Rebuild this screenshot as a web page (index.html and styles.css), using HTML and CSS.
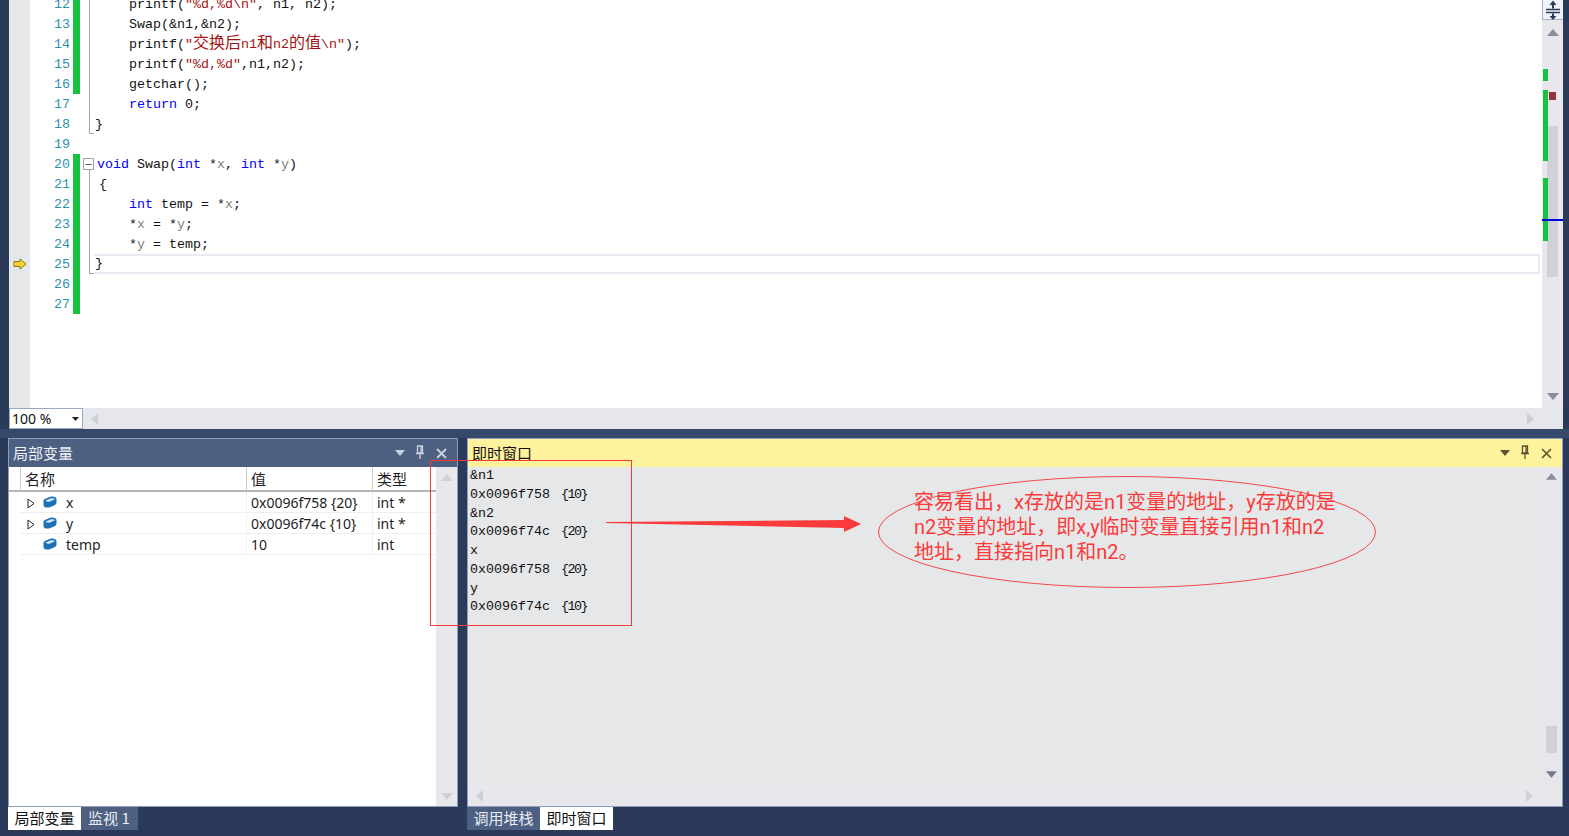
FILE: index.html
```html
<!DOCTYPE html>
<html lang="zh">
<head>
<meta charset="utf-8">
<title>局部变量</title>
<link rel="stylesheet" href="styles.css">
</head>
<body>
<div class="editor">
  <div class="code-area">
    <div class="lines">
      <div class="line"><span class="mg"></span><span class="num">12</span><span class="chg"></span><span class="ol ol-bar"></span><span class="code">    printf(<s>"%d,%d\n"</s>, n1, n2);</span></div>
      <div class="line"><span class="mg"></span><span class="num">13</span><span class="chg"></span><span class="ol ol-bar"></span><span class="code">    Swap(&amp;n1,&amp;n2);</span></div>
      <div class="line"><span class="mg"></span><span class="num">14</span><span class="chg"></span><span class="ol ol-bar"></span><span class="code">    printf(<s>"<i>交换后</i>n1<i>和</i>n2<i>的值</i>\n"</s>);</span></div>
      <div class="line"><span class="mg"></span><span class="num">15</span><span class="chg"></span><span class="ol ol-bar"></span><span class="code">    printf(<s>"%d,%d"</s>,n1,n2);</span></div>
      <div class="line"><span class="mg"></span><span class="num">16</span><span class="chg"></span><span class="ol ol-bar"></span><span class="code">    getchar();</span></div>
      <div class="line"><span class="mg"></span><span class="num">17</span><span class="chg off"></span><span class="ol ol-bar"></span><span class="code">    <b>return</b> 0;</span></div>
      <div class="line"><span class="mg"></span><span class="num">18</span><span class="chg off"></span><span class="ol ol-end"></span><span class="code brace">}</span></div>
      <div class="line"><span class="mg"></span><span class="num">19</span><span class="chg off"></span><span class="ol"></span><span class="code"></span></div>
      <div class="line"><span class="mg"></span><span class="num">20</span><span class="chg"></span><span class="ol"><svg width="17" height="20" viewBox="0 0 17 20"><path d="M9.500 16V20" stroke="#a5a5a5"/><rect x="3.500" y="4.500" width="10" height="11" fill="#fff" stroke="#a5a5a5"/><path d="M5.500 10.500H11.500" stroke="#555"/></svg></span><span class="code"><b>void</b> Swap(<b>int</b> *<u>x</u>, <b>int</b> *<u>y</u>)</span></div>
      <div class="line"><span class="mg"></span><span class="num">21</span><span class="chg"></span><span class="ol ol-bar"></span><span class="code open">{</span></div>
      <div class="line"><span class="mg"></span><span class="num">22</span><span class="chg"></span><span class="ol ol-bar"></span><span class="code">    <b>int</b> temp = *<u>x</u>;</span></div>
      <div class="line"><span class="mg"></span><span class="num">23</span><span class="chg"></span><span class="ol ol-bar"></span><span class="code">    *<u>x</u> = *<u>y</u>;</span></div>
      <div class="line"><span class="mg"></span><span class="num">24</span><span class="chg"></span><span class="ol ol-bar"></span><span class="code">    *<u>y</u> = temp;</span></div>
      <div class="line"><span class="mg"><svg width="14" height="12" viewBox="0 0 14 12"><path d="M1 3.500H7V1L13 6L7 11V8.500H1Z" fill="#f6d32d" stroke="#8a7a20"/></svg></span><span class="num">25</span><span class="chg"></span><span class="ol ol-end"></span><span class="code current">}</span></div>
      <div class="line"><span class="mg"></span><span class="num">26</span><span class="chg"></span><span class="ol"></span><span class="code"></span></div>
      <div class="line"><span class="mg"></span><span class="num">27</span><span class="chg"></span><span class="ol"></span><span class="code"></span></div>
      <div class="line fill"><span class="mg"></span><span class="code"></span></div>
    </div>
    <div class="vscroll">
      <div class="splitter"><svg width="21" height="20" viewBox="0 0 21 20"><path d="M3 9.500H17M3 12.500H17" stroke="#2f3b52" stroke-width="1.500"/><path d="M10 0.500L6.500 5H9V8.500H11V5H13.500ZM10 20L6.500 16H9V13.500H11V16H13.500Z" fill="#2f3b52"/></svg></div>
      <svg class="arrow-up" width="12" height="7" viewBox="0 0 12 7"><path d="M6 0L12 7H0Z" fill="#8a8c9c"/></svg>
      <span class="thumb"></span>
      <span class="g g1"></span><span class="g g2"></span><span class="g g3"></span>
      <span class="red"></span>
      <span class="blue"></span>
      <svg class="arrow-down" width="12" height="7" viewBox="0 0 12 7"><path d="M0 0H12L6 7Z" fill="#8a8c9c"/></svg>
    </div>
  </div>
</div>
<div class="hbar">
  <div class="combo"><span>100 %</span><svg width="7" height="4" viewBox="0 0 7 4"><path d="M0 0H7L3.500 4Z" fill="#222"/></svg></div>
  <svg width="7" height="12" viewBox="0 0 7 12"><path d="M7 0V12L0 6Z" fill="#cfd0d6"/></svg>
  <svg class="push" width="7" height="12" viewBox="0 0 7 12"><path d="M0 0V12L7 6Z" fill="#cfd0d6"/></svg>
</div>
<div class="divider"></div>
<div class="panels">
  <section class="panel locals">
    <header class="title">
      <span class="title-text">局部变量</span>
      <svg class="dd" width="10" height="6" viewBox="0 0 10 6"><path d="M0 0H10L5 6Z" fill="#ccd3e0"/></svg>
      <svg class="pin" width="10" height="14" viewBox="0 0 10 14"><path d="M2.500 1H7.500V8H2.500ZM1 8.500H9M5 9V14M6 1V8" fill="none" stroke="#ccd3e0" stroke-width="1.300"/></svg>
      <svg class="cl" width="11" height="11" viewBox="0 0 11 11"><path d="M1 1L10 10M10 1L1 10" stroke="#ccd3e0" stroke-width="1.800"/></svg>
    </header>
    <div class="locals-body">
      <div class="tbl">
        <div class="tr th"><span></span><span class="c c-name">名称</span><span class="c">值</span><span class="c">类型</span></div>
        <div class="tr"><span></span><span class="c c-name"><svg class="tri" width="8" height="11" viewBox="0 0 8 11"><path d="M1 1L7 5.500L1 10Z" fill="#fff" stroke="#222"/></svg><svg class="cube" width="14" height="12" viewBox="0 0 14 12"><path d="M0.500 4.500Q0.500 3.500 3 2.500L8 0.500Q13 0 13.500 3V7Q13.500 8 11 9.500L6 11.500Q0.500 12 0.500 9Z" fill="#1c6fb5"/><path d="M2.500 4.500L8 2.300Q11 2 12 3.300L6.500 5.800Q3.500 6 2.500 4.500Z" fill="#cfe6f6"/></svg>x</span><span class="c">0x0096f758 {20}</span><span class="c">int *</span></div>
        <div class="tr"><span></span><span class="c c-name"><svg class="tri" width="8" height="11" viewBox="0 0 8 11"><path d="M1 1L7 5.500L1 10Z" fill="#fff" stroke="#222"/></svg><svg class="cube" width="14" height="12" viewBox="0 0 14 12"><path d="M0.500 4.500Q0.500 3.500 3 2.500L8 0.500Q13 0 13.500 3V7Q13.500 8 11 9.500L6 11.500Q0.500 12 0.500 9Z" fill="#1c6fb5"/><path d="M2.500 4.500L8 2.300Q11 2 12 3.300L6.500 5.800Q3.500 6 2.500 4.500Z" fill="#cfe6f6"/></svg>y</span><span class="c">0x0096f74c {10}</span><span class="c">int *</span></div>
        <div class="tr"><span></span><span class="c c-name"><span class="tri-space"></span><svg class="cube" width="14" height="12" viewBox="0 0 14 12"><path d="M0.500 4.500Q0.500 3.500 3 2.500L8 0.500Q13 0 13.500 3V7Q13.500 8 11 9.500L6 11.500Q0.500 12 0.500 9Z" fill="#1c6fb5"/><path d="M2.500 4.500L8 2.300Q11 2 12 3.300L6.500 5.800Q3.500 6 2.500 4.500Z" fill="#cfe6f6"/></svg>temp</span><span class="c">10</span><span class="c">int</span></div>
      </div>
      <div class="side-scroll">
        <svg width="12" height="7" viewBox="0 0 12 7"><path d="M6 0L12 7H0Z" fill="#d0d1d7"/></svg>
        <svg width="12" height="7" viewBox="0 0 12 7"><path d="M0 0H12L6 7Z" fill="#d0d1d7"/></svg>
      </div>
    </div>
  </section>
  <section class="panel immediate">
    <header class="title title-active">
      <span class="title-text">即时窗口</span>
      <svg class="dd" width="10" height="6" viewBox="0 0 10 6"><path d="M0 0H10L5 6Z" fill="#5b5231"/></svg>
      <svg class="pin" width="10" height="14" viewBox="0 0 10 14"><path d="M2.500 1H7.500V8H2.500ZM1 8.500H9M5 9V14M6 1V8" fill="none" stroke="#5b5231" stroke-width="1.300"/></svg>
      <svg class="cl" width="11" height="11" viewBox="0 0 11 11"><path d="M1 1L10 10M10 1L1 10" stroke="#5b5231" stroke-width="1.600"/></svg>
    </header>
    <div class="imm-body">
      <div class="imm-main">
        <pre class="imm-text">&amp;n1
0x0096f758<em>{10}</em>
&amp;n2
0x0096f74c<em>{20}</em>
x
0x0096f758<em>{20}</em>
y
0x0096f74c<em>{10}</em></pre>
        <div class="imm-scroll">
          <svg width="11" height="7" viewBox="0 0 12 7"><path d="M6 0L12 7H0Z" fill="#8a8c9c"/></svg>
          <span class="imm-thumb"></span>
          <svg width="11" height="7" viewBox="0 0 12 7"><path d="M0 0H12L6 7Z" fill="#777988"/></svg>
        </div>
      </div>
      <div class="imm-h">
        <svg width="7" height="12" viewBox="0 0 7 12"><path d="M7 0V12L0 6Z" fill="#cfd0d6"/></svg>
        <svg class="push" width="7" height="12" viewBox="0 0 7 12"><path d="M0 0V12L7 6Z" fill="#cfd0d6"/></svg>
      </div>
    </div>
  </section>
</div>
<div class="tabs">
  <div class="tabgroup left">
    <span class="tab on">局部变量</span><span class="tab off-tab watch">监视 1</span>
  </div>
  <div class="tabgroup right">
    <span class="tab off-tab">调用堆栈</span><span class="tab on">即时窗口</span>
  </div>
</div>
<svg class="marks" width="1569" height="836" viewBox="0 0 1569 836">
  <rect x="430.500" y="460.500" width="201" height="165" fill="none" stroke="#f43b3b"/>
  <path d="M606 522L844 520V516L861 524L844 532V528L606 523Z" fill="#fb3b3b"/>
  <ellipse cx="1127" cy="532" rx="248.500" ry="55.500" fill="none" stroke="#f4474b"/>
</svg>
<p class="note">容易看出，x存放的是n1变量的地址，y存放的是<br>n2变量的地址，即x,y临时变量直接引用n1和n2<br>地址，直接指向n1和n2。</p>
</body>
</html>
```
FILE: styles.css
```css
* { box-sizing: border-box; }
html, body { margin: 0; padding: 0; }
body {
  width: 1569px;
  height: 836px;
  overflow: hidden;
  background: #2a3a58;
  padding: 0 6px 0 9px;
  display: flex;
  flex-direction: column;
  font-family: "Noto Sans", "Noto Sans CJK SC", sans-serif;
}
svg { display: block; flex: none; }

/* editor */
.editor { height: 408px; flex: none; background: #fff; overflow: hidden; }
.code-area { display: flex; height: 100%; }
.lines { flex: 1; margin-top: -6px; display: flex; flex-direction: column; }
.line { display: flex; height: 20px; flex: none; }
.line.fill { flex: 1; }
.mg { width: 21px; background: #e6e7e8; display: flex; align-items: center; padding-left: 4px; flex: none; }
.num {
  width: 41px; padding: 1px 1px 0 0; text-align: right; flex: none;
  color: #2b91af; font: 13.33px/20px "Liberation Mono", monospace;
}
.chg { width: 7px; margin-left: 2px; background: #16c23f; flex: none; }
.chg.off { background: none; }
.ol { width: 17px; flex: none; }
.ol-bar { background: linear-gradient(#a5a5a5, #a5a5a5) 9px 0 / 1px 100% no-repeat; }
.ol-end {
  background:
    linear-gradient(#a5a5a5, #a5a5a5) 9px 0 / 1px 100% no-repeat,
    linear-gradient(#a5a5a5, #a5a5a5) 9px 19px / 5px 1px no-repeat;
}
.code {
  flex: 1; white-space: pre; color: #111; padding-top: 1px;
  font: 13.33px/19px "Liberation Mono", monospace;
  overflow: hidden;
}
.code b { font-weight: normal; color: #0000ff; }
.code s { text-decoration: none; color: #a31515; }
.code u { text-decoration: none; color: #808080; }
.code i { font: 16px/0 "Noto Sans CJK SC", sans-serif; }
.code.open { padding-left: 2px; }
.code.brace { margin-left: -2px; padding-left: 2px; text-indent: -2px; }
.code.current {
  margin: 0 2px 0 -3px; padding: 0 0 0 1px; line-height: 16px;
  border: 2px solid #eaeaf2; border-left: 0;
}

.vscroll { width: 21px; flex: none; background: #e8e8ec; position: relative; display: flex; flex-direction: column; align-items: center; }
.splitter { width: 21px; height: 20px; background: #eef2fb; border-bottom: 1px solid #a9b3c9; border-left: 1px solid #a9b3c9; }
.arrow-up { margin-top: 9px; }
.arrow-down { margin-top: auto; margin-bottom: 8px; }
.thumb { position: absolute; left: 5px; top: 126px; width: 11px; height: 151px; background: #d0d1d7; }
.g { position: absolute; left: 1px; width: 5px; background: #16c23f; }
.g1 { top: 69px; height: 12px; }
.g2 { top: 90px; height: 71px; }
.g3 { top: 178px; height: 63px; }
.red { position: absolute; left: 7px; top: 92px; width: 7px; height: 8px; background: #97323f; }
.blue { position: absolute; left: 0; top: 219px; width: 21px; height: 2px; background: #0000d8; }

.hbar {
  height: 21px; flex: none; background: #e6e7ec;
  display: flex; align-items: center; gap: 8px; padding-right: 29px;
}
.combo {
  width: 74px; height: 21px; background: #fff; border: 1px solid #9aa8c2;
  display: flex; align-items: center; justify-content: space-between;
  padding: 0 3px 0 2px; font-size: 14px; color: #111;
}
.push { margin-left: auto; }
.divider { height: 9px; flex: none; background: #35496a; margin: 0 -6px 0 -9px; }

/* panels */
.panels { display: flex; gap: 9px; height: 369px; flex: none; margin-left: -1px; }
.panel { display: flex; flex-direction: column; border: 1px solid #8c9dbd; }
.locals { width: 450px; flex: none; }
.immediate { flex: 1; }
.title {
  height: 28px; flex: none; background: #4d6082; color: #eef1f6;
  display: flex; align-items: center; padding: 0 10px 0 4px;
  font: 15px/20px "Noto Sans CJK SC", sans-serif;
}
.title-active { background: #fff29d; color: #111; }
.title-text { margin-right: auto; }
.dd { margin-right: 10px; }
.pin { margin-right: 11px; margin-top: -2px; }

.locals-body { flex: 1; display: flex; background: #fff; min-height: 0; }
.tbl { flex: 1; }
.tr {
  display: grid; grid-template-columns: 11px 226px 126px 1fr;
  height: 21px; font-size: 14px; line-height: 18px; color: #1e1e1e;
}
.tr .c { border-left: 1px solid #f0f0f0; border-bottom: 1px solid #eeeeee; padding: 2px 0 0 4px; white-space: nowrap; }
.tr .c-name { display: flex; align-items: center; border-left: 0; }
.tr.th { height: 25px; font: 15px/23px "Noto Sans CJK SC", sans-serif; }
.tr.th .c { border-left: 1px solid #c9c9c9; border-bottom: 2px solid #b5b5b5; padding-top: 0; }
.tr.th span:first-child { border-bottom: 2px solid #b5b5b5; }
.tri { margin: 0 8px 0 3px; }
.tri-space { width: 19px; flex: none; }
.cube { margin-right: 9px; margin-top: -3px; }
.side-scroll {
  width: 21px; flex: none; background: #e8e8ec;
  display: flex; flex-direction: column; align-items: center; justify-content: space-between;
  padding: 7px 0 6px;
}

.imm-body { flex: 1; background: #e6e7e8; display: flex; flex-direction: column; min-height: 0; }
.imm-main { flex: 1; display: flex; min-height: 0; }
.imm-text {
  flex: 1; margin: 0; padding-left: 2px; color: #111;
  font: 13.33px/18.75px "Liberation Mono", monospace;
}
.imm-text em { font-style: normal; margin-left: 11px; letter-spacing: -1.5px; }
.imm-scroll {
  width: 21px; flex: none; background: #e6e7ec;
  display: flex; flex-direction: column; align-items: center;
  padding: 6px 0 7px;
}
.imm-thumb { width: 11px; height: 27px; background: #d0d1d7; margin: auto 0 18px; }
.imm-h { height: 21px; flex: none; background: #e8e8ec; display: flex; align-items: center; padding: 0 29px 0 8px; }

/* tabs */
.tabs { display: flex; gap: 9px; height: 23px; flex: none; margin-left: -1px; }
.tabgroup { display: flex; }
.tabgroup.left { width: 450px; }
.tab { padding: 0 6.5px; height: 23px; font: 15px/22px "Noto Sans CJK SC", sans-serif; white-space: nowrap; }
.tab.on { background: #fff; color: #111; }
.tab.off-tab { background: #4d6082; color: #e9edf4; }
.tab.watch { padding: 0 8px 0 7px; }

/* annotations drawn over the screenshot */
.marks { position: absolute; left: 0; top: 0; pointer-events: none; }
.note {
  position: absolute; left: 914px; top: 490px; margin: 0;
  font: 20px/25px Roboto, "Noto Sans CJK SC", sans-serif;
  color: #fb3b3b; white-space: nowrap;
}
```
